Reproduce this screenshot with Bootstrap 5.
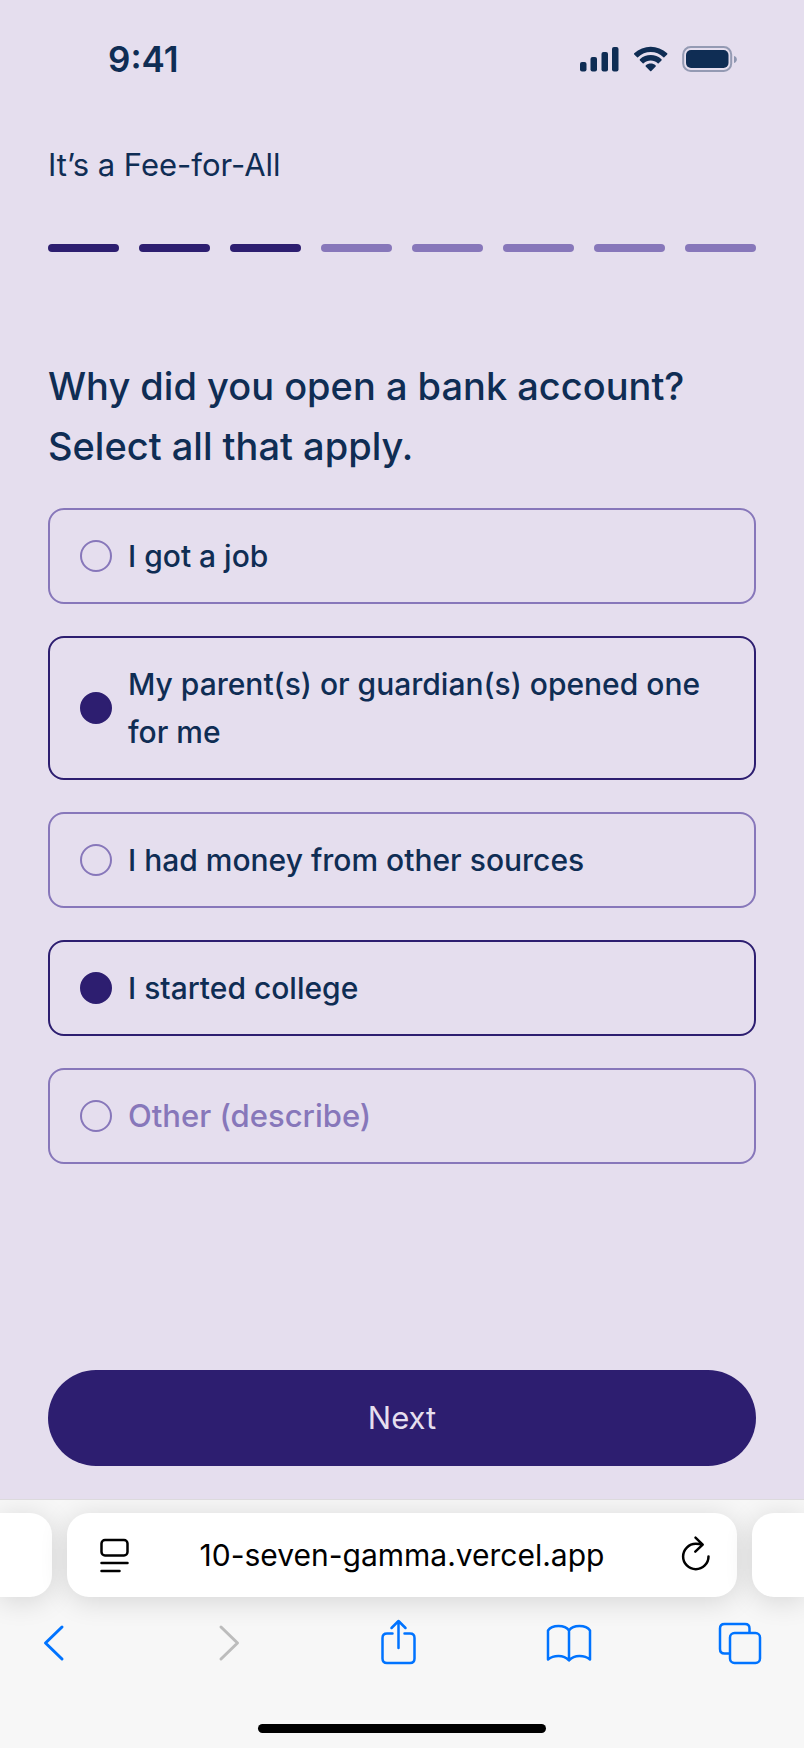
<!DOCTYPE html>
<html lang="en">
<head>
<meta charset="utf-8">
<meta name="viewport" content="width=device-width, initial-scale=1">
<title>It’s a Fee-for-All</title>
<link href="https://cdn.jsdelivr.net/npm/bootstrap@5.3.0/dist/css/bootstrap.min.css" rel="stylesheet">
<style>
:root { --paper: #e5deee; --ink: #0f2d54; --deep: #2d1e70; --soft: #8777ba; --ios-blue: #0073ff; }
body { background: var(--paper); color: var(--ink); font-family: Inter, "Liberation Sans", sans-serif; font-size: 31px; line-height: 48px; }
svg { display: block; flex: none; }
.status-bar { height: 118px; padding: 0 68px 0 108px; }
.clock { font-size: 35px; font-weight: 600; }
.quiz { padding: 23px 48px 33px; }
.quiz-title { font-size: 31px; line-height: 48px; }
.steps { gap: 20px; margin-top: 55px; }
.step { height: 8px; border-radius: 4px; background: var(--soft); }
.step.done { background: var(--deep); }
.question { font-size: 38px; line-height: 60px; font-weight: 450; margin: 104px 0 32px; }
.choices { gap: 32px; font-size: 30px; font-weight: 500; }
.choice { gap: 16px; padding: 22px 30px; border: 2px solid var(--soft); border-radius: 16px; }
.choice:has(.choice-box:checked) { border-color: var(--deep); }
.choice-box.form-check-input { width: 32px; height: 32px; margin: 0; border: 2px solid var(--soft); border-radius: 50%; background: transparent; flex: none; }
.choice-box.form-check-input:checked { background: var(--deep); border-color: var(--deep); }
.other-text { border: 0; padding: 0; background: transparent; color: var(--ink); font-size: 31px; font-weight: 500; height: 48px; min-width: 0; outline: 0; }
.other-text::placeholder { color: var(--soft); opacity: 1; }
.next-btn { margin-top: auto; height: 96px; flex: none; border: 0; border-radius: 48px; background: var(--deep); color: var(--paper); font-size: 31px; }
.browser { background: #f7f7f7; border-top: 1px solid #dcdadd; padding: 13px 0 15px; overflow: hidden; }
.tabs-row { gap: 15px; }
.tab-pill { height: 84px; background: #fff; border-radius: 22px; box-shadow: 0 4px 28px rgba(0,0,0,.14); }
.tab-edge { width: 52px; flex: none; }
.tab-edge.at-left { border-radius: 0 22px 22px 0; }
.tab-edge.at-right { border-radius: 22px 0 0 22px; }
.tab-main { padding: 0 25px 0 31px; color: #000; min-width: 0; }
.address { border: 0; padding: 0 6px 0 0; background: transparent; color: #000; font-size: 30px; min-width: 0; outline: 0; }
.icon-btn { border: 0; padding: 0; background: transparent; color: inherit; }
.tools { color: var(--ios-blue); padding: 21px 41px 0 31px; }
.icon-btn:disabled { color: #bcbcbc; }
.home-bar { width: 288px; height: 9px; border-radius: 5px; background: #000; margin: 58px auto 0; }
</style>
</head>
<body>
<div class="d-flex flex-column min-vh-100">
  <header class="status-bar d-flex align-items-center justify-content-between">
    <span class="clock">9:41</span>
    <div class="d-flex align-items-center" aria-hidden="true">
      <svg width="156" height="30" viewBox="0 0 156 30" overflow="visible">
        <g fill="#0f2d54">
          <rect x="0" y="18" width="6.500" height="9.500" rx="2"/>
          <rect x="10.500" y="13" width="6.500" height="14.500" rx="2"/>
          <rect x="21.500" y="8" width="6.500" height="19.500" rx="2"/>
          <rect x="32" y="3" width="6.500" height="24.500" rx="2"/>
          <path d="M70.700 8.100c4.700 0 9.300 1.800 12.700 5.100.3.300.7.300.9 0l2.900-2.800c.3-.3.300-.8 0-1.100-9.300-8.700-23.700-8.700-33 0-.3.300-.3.800 0 1.100l2.900 2.800c.3.300.7.300.9 0 3.400-3.300 8-5.100 12.700-5.100z"/>
          <path d="M70.700 16.500c2.600 0 5.100 1 7 2.700.3.300.7.300 1 0l2.800-2.800c.3-.3.300-.8 0-1.100-6.100-5.600-15.500-5.600-21.600 0-.3.300-.3.800 0 1.100l2.800 2.800c.3.300.7.300 1 0 1.900-1.700 4.400-2.700 7-2.700z"/>
          <path d="M75.700 22.500c.3-.3.300-.8 0-1.100-2.900-2.500-7.100-2.500-10 0-.3.300-.3.800 0 1.100l4.400 4.500c.3.400.9.400 1.200 0z"/>
          <rect x="106" y="6" width="42.500" height="18" rx="5"/>
          <path d="M154 12v7c1.900-.6 2.800-1.900 2.800-3.500s-.9-2.900-2.800-3.500z" fill-opacity=".4"/>
        </g>
        <rect x="103.200" y="3" width="48" height="24" rx="7.500" fill="none" stroke="#0f2d54" stroke-opacity=".38" stroke-width="2"/>
      </svg>
    </div>
  </header>

  <main class="quiz d-flex flex-column flex-grow-1">
    <h1 class="quiz-title fw-normal m-0">It’s a Fee-for-All</h1>
    <div class="steps d-flex" role="progressbar" aria-label="Quiz progress" aria-valuemin="0" aria-valuemax="8" aria-valuenow="3">
      <span class="step done flex-fill"></span><span class="step done flex-fill"></span><span class="step done flex-fill"></span><span class="step flex-fill"></span><span class="step flex-fill"></span><span class="step flex-fill"></span><span class="step flex-fill"></span><span class="step flex-fill"></span>
    </div>

    <h2 class="question">Why did you open a bank account?<br>Select all that apply.</h2>
    <div class="choices d-flex flex-column">
      <label class="choice d-flex align-items-center" for="job"><input class="choice-box form-check-input" type="checkbox" id="job"><span>I got a job</span></label>
      <label class="choice d-flex align-items-center" for="parent"><input class="choice-box form-check-input" type="checkbox" id="parent" checked><span>My parent(s) or guardian(s) opened one for me</span></label>
      <label class="choice d-flex align-items-center" for="money"><input class="choice-box form-check-input" type="checkbox" id="money"><span>I had money from other sources</span></label>
      <label class="choice d-flex align-items-center" for="college"><input class="choice-box form-check-input" type="checkbox" id="college" checked><span>I started college</span></label>
      <div class="choice d-flex align-items-center"><input class="choice-box form-check-input" type="checkbox" id="other" aria-label="Other"><input class="other-text flex-grow-1" type="text" placeholder="Other (describe)" aria-label="Other (describe)"></div>
    </div>
    <button class="next-btn btn w-100" type="button">Next</button>
  </main>

  <footer class="browser">
    <div class="tabs-row d-flex">
      <div class="tab-pill tab-edge at-left"></div>
      <div class="tab-pill tab-main d-flex align-items-center flex-grow-1">
        <button class="icon-btn" type="button" aria-label="Page menu">
          <svg width="32" height="40" viewBox="0 0 32 40" fill="none" stroke="currentColor" stroke-width="2.500" stroke-linecap="round">
            <rect x="3.500" y="5" width="26" height="15.500" rx="3.500"/><path d="M3.500 28h26M3.500 36h18"/>
          </svg>
        </button>
        <input class="address flex-grow-1 text-center" type="text" value="10-seven-gamma.vercel.app" aria-label="Address">
        <button class="icon-btn" type="button" aria-label="Reload">
          <svg width="32" height="40" viewBox="0 1 32 40" fill="none" stroke="currentColor" stroke-width="2.500" stroke-linecap="round" stroke-linejoin="round">
            <path d="M28.500 22.500A12.700 12.700 0 1 1 15.800 9.800q3.500 0 6.500.8M15.500 3.700l7.200 7-7.400 7"/>
          </svg>
        </button>
      </div>
      <div class="tab-pill tab-edge at-right"></div>
    </div>
    <nav class="tools d-flex align-items-center justify-content-between" aria-label="Browser tools">
      <button class="icon-btn" type="button" aria-label="Back"><svg width="46" height="48" viewBox="-9 0 46 48" fill="none" stroke="currentColor" stroke-width="3" stroke-linecap="round" stroke-linejoin="round"><path d="M22 9 5.500 25 22 41"/></svg></button>
      <button class="icon-btn" type="button" aria-label="Forward" disabled><svg width="46" height="48" viewBox="-12 0 46 48" fill="none" stroke="currentColor" stroke-width="3" stroke-linecap="round" stroke-linejoin="round"><path d="M6 9 22.500 25 6 41"/></svg></button>
      <button class="icon-btn" type="button" aria-label="Share"><svg width="46" height="48" viewBox="-5.500 0 46 48" fill="none" stroke="currentColor" stroke-width="2.500" stroke-linecap="round" stroke-linejoin="round"><path d="M13 15.500H7.500q-4.500 0-4.500 4.500v20.500Q3 45 7.500 45h23q4.500 0 4.500-4.500V20q0-4.500-4.500-4.500H25M19 30V3M12 10l7-7 7 7"/></svg></button>
      <button class="icon-btn" type="button" aria-label="Bookmarks"><svg width="46" height="48" viewBox="0 0 46 48" fill="none" stroke="currentColor" stroke-width="2.500" stroke-linejoin="round"><path d="M23 12.500Q20 8 12.500 8T2 12.500V41.500q4-3.500 10.500-3.500T23 42.500q4-4.500 10.500-4.500T44 41.500V12.500Q41 8 33.500 8T23 12.500V42"/></svg></button>
      <button class="icon-btn" type="button" aria-label="Tabs"><svg width="46" height="48" viewBox="0 0 46 48" fill="none" stroke="currentColor" stroke-width="2.500" stroke-linejoin="round"><rect x="13" y="15" width="30" height="30" rx="4.500"/><path d="M13 35.500H7.500Q3 35.500 3 31V10.500Q3 6 7.500 6H28q4.500 0 4.500 4.500V15"/></svg></button>
    </nav>
    <div class="home-bar"></div>
  </footer>
</div>
<script src="https://cdn.jsdelivr.net/npm/bootstrap@5.3.0/dist/js/bootstrap.bundle.min.js"></script>
</body>
</html>
